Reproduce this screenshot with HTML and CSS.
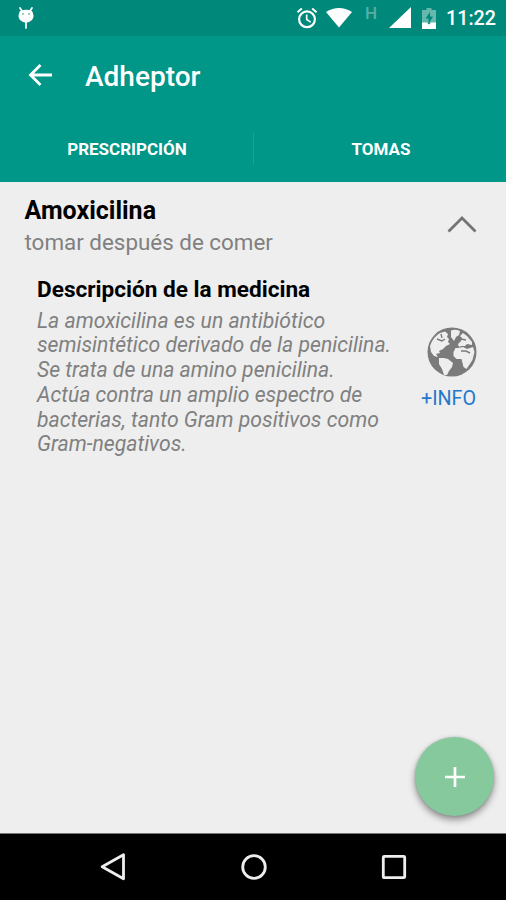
FILE: index.html
```html
<!DOCTYPE html>
<html lang="es">
<head>
<meta charset="utf-8">
<title>Adheptor</title>
<link rel="stylesheet" href="styles.css">
</head>
<body>
<div class="screen">
  <div class="status">
    <svg class="bug" width="18" height="24" viewBox="0 0 18 24"><path d="M3 1l1.500 2.300M15 1l-1.500 2.300M9 15v6" stroke="#fff" stroke-width="1.700" stroke-linecap="round"/><path d="M3 4Q9 1.500 15 4Q18 9 15 13Q9 18.500 3 13Q0 9 3 4Z" fill="#fff"/><circle cx="6" cy="7" r=".9" fill="#66b8af"/><circle cx="12" cy="7" r=".9" fill="#66b8af"/></svg>
    <div class="indicators">
      <svg class="alarm" width="22" height="22" viewBox="0 0 22 22" fill="none" stroke="#fff"><circle cx="11" cy="12.300" r="7.900" stroke-width="2.200"/><path d="M1.500 5.300l4.300-3.700M20.500 5.300l-4.300-3.700" stroke-width="2"/><path d="M10.700 7.500v5l4 2.700" stroke-width="1.600"/></svg>
      <svg class="wifi" width="26" height="20" viewBox="0 0 26 20"><path d="M0 4Q13-4 26 4L13 19.500Z" fill="#fff"/></svg>
      <span class="network">H</span>
      <svg class="signal" width="22" height="21" viewBox="0 0 22 21"><path d="M22 0v21H0Z" fill="#fff"/></svg>
      <svg class="battery" width="14" height="21" viewBox="0 0 14 21"><path d="M4.500 0h5v2H14v13H0V2h4.500Z" fill="#66b8af"/><path d="M0 14.500h5l2 2 2-2h5V21H0Z" fill="#fff"/><path d="M8 4v4.500h3L6.500 16v-5.500H3.500Z" fill="#00897b"/></svg>
      <span class="clock">11:22</span>
    </div>
  </div>
  <header class="appbar">
    <svg class="back" width="24" height="24" viewBox="0 0 24 24" fill="none" stroke="#fff" stroke-width="2.800"><path d="M12.500 2L2.500 12l10 10M2.500 12H24"/></svg>
    <h1>Adheptor</h1>
  </header>
  <nav class="tabs">
    <div class="tab">PRESCRIPCIÓN</div>
    <div class="tab">TOMAS</div>
  </nav>
  <main class="content">
    <div class="group">
      <div>
        <h2>Amoxicilina</h2>
        <p class="note">tomar después de comer</p>
      </div>
      <svg class="chevron" width="30" height="18" viewBox="0 0 30 18" fill="none" stroke="#737373" stroke-width="2.800"><path d="M1.500 16.500L15 3l13.500 13.500"/></svg>
    </div>
    <div class="detail">
      <div class="description">
        <h3>Descripción de la medicina</h3>
        <p>La amoxicilina es un antibiótico<br>semisintético derivado de la penicilina.<br>Se trata de una amino penicilina.<br>Actúa contra un amplio espectro de<br>bacterias, tanto Gram positivos como<br>Gram-negativos.</p>
      </div>
      <div class="info">
        <svg width="50" height="50" viewBox="0 0 50 50"><circle cx="25" cy="25" r="24.500" fill="#7b7b7b"/><g fill="#eee"><path d="M3 19Q6 10 13 6L18 4.500 21 7 20 10 22 12 21 15 23 17 19 19 16 22 12 24 13 26 9 27 11 30 7 29 4 25Z"/><path d="M24 3.500Q28 2 33 4L32 8 29 10 27 14 24 10Z"/><path d="M12 31l5 0 4 1 5 4-1 4-3 4-2 4-3 0-2-6-3-5Z"/><path d="M36 6l4 3 5 6 0 3-5-1-2 2-4 0-2 1-1-3 3-3 1-3-2-2 2-2Z"/><path d="M31 21l5-1 4 2 6-2 1.500 5-2 8-6 9-3-2-2-8-5 0-3-3 0-4 2-4Z"/></g><path d="M10 12l5 2 3-2M14 7l1 4M34 12l5 1M34 24l5 0 4 2" stroke="#7b7b7b" stroke-width="1.400" fill="none"/></svg>
        <span>+INFO</span>
      </div>
    </div>
  </main>
  <footer class="navbar">
    <svg width="26" height="28" viewBox="0 0 26 28"><path d="M23.500 1.800v24L2.200 13.800Z"/></svg>
    <svg width="26" height="28" viewBox="0 0 26 28"><circle cx="13" cy="14" r="11.300"/></svg>
    <svg width="26" height="28" viewBox="0 0 26 28"><rect x="2.300" y="3.300" width="21.400" height="21.400" rx="1"/></svg>
  </footer>
  <div class="fab"><svg width="20" height="20" viewBox="0 0 20 20"><path d="M10 0v20M0 10h20" stroke="#fff" stroke-width="2.700"/></svg></div>
</div>
</body>
</html>
```
FILE: styles.css
```css
* { box-sizing: border-box; }
body, h1, h2, h3, p { margin: 0; }
body { font-family: Roboto, sans-serif; background: #eee; }
svg { display: block; flex: none; }
.screen {
  position: relative;
  display: flex;
  flex-direction: column;
  width: 506px;
  height: 900px;
  overflow: hidden;
}
.status {
  display: flex;
  justify-content: space-between;
  height: 36px;
  padding: 0 11px 0 17px;
  background: #00897b;
}
.bug { margin-top: 7px; }
.indicators { display: flex; color: #fff; }
.alarm { margin-top: 7px; }
.wifi { margin: 8px 0 0 8px; }
.network {
  margin: 3px 0 0 13px;
  width: 13px;
  font-size: 17px;
  line-height: 20px;
  font-weight: 500;
  color: #57b0a6;
}
.signal { margin: 7px 0 0 11px; }
.battery { margin: 8px 0 0 11px; }
.clock {
  margin-left: 10px;
  width: 49px;
  font-size: 19.700px;
  line-height: 38px;
  font-weight: 500;
  white-space: nowrap;
}
.appbar {
  display: flex;
  align-items: center;
  height: 80px;
  padding-left: 28px;
  background: #009688;
  color: #fff;
}
.appbar h1 {
  margin: 2px 0 0 33px;
  font-size: 28px;
  line-height: 34px;
  font-weight: 500;
}
.back { margin-top: -2px; }
.tabs {
  display: flex;
  height: 65.500px;
  background: #009688;
}
.tab {
  flex: 1;
  padding-left: 2px;
  font-size: 17px;
  line-height: 66px;
  font-weight: 700;
  text-align: center;
  color: #fff;
}
.tab + .tab {
  padding-left: 4px;
  background: linear-gradient(#1ba093, #1ba093) 1px 16px / 1px 33px no-repeat;
}
.content { flex: 1; }
.group {
  display: flex;
  justify-content: space-between;
  padding: 13.500px 29px 0 24.500px;
}
.group h2 {
  font-size: 25px;
  line-height: 32px;
  font-weight: 700;
  color: #000;
}
.note {
  font-size: 22.400px;
  line-height: 31px;
  color: #808080;
}
.chevron { margin-top: 19.500px; }
.detail {
  display: flex;
  justify-content: space-between;
  margin-top: 17.500px;
  padding: 0 29px 0 37px;
}
.detail h3 {
  font-size: 22.600px;
  line-height: 28px;
  font-weight: 700;
  color: #000;
}
.description p {
  margin-top: 5px;
  font-size: 21.200px;
  line-height: 24.800px;
  font-style: italic;
  white-space: nowrap;
  color: #808080;
}
.info {
  display: flex;
  flex-direction: column;
  align-items: flex-end;
  padding-top: 51.500px;
}
.info span {
  margin: 9px 1px 0 0;
  font-size: 19.700px;
  line-height: 26px;
  color: #2478cc;
}
.navbar {
  display: flex;
  justify-content: center;
  gap: 114.500px;
  height: 67px;
  padding: 19px 0 0 1px;
  background: #000;
  border-top: 1px solid #777;
}
.navbar svg {
  fill: none;
  stroke: #eee;
  stroke-width: 2.800px;
  stroke-linejoin: round;
}
.fab {
  position: absolute;
  right: 12px;
  bottom: 84px;
  display: grid;
  place-items: center;
  width: 79px;
  height: 79px;
  border-radius: 50%;
  background: #86c99c;
  box-shadow: 0 4px 7px rgba(0, 0, 0, .4), 0 0 3px rgba(0, 0, 0, .15);
}
```
